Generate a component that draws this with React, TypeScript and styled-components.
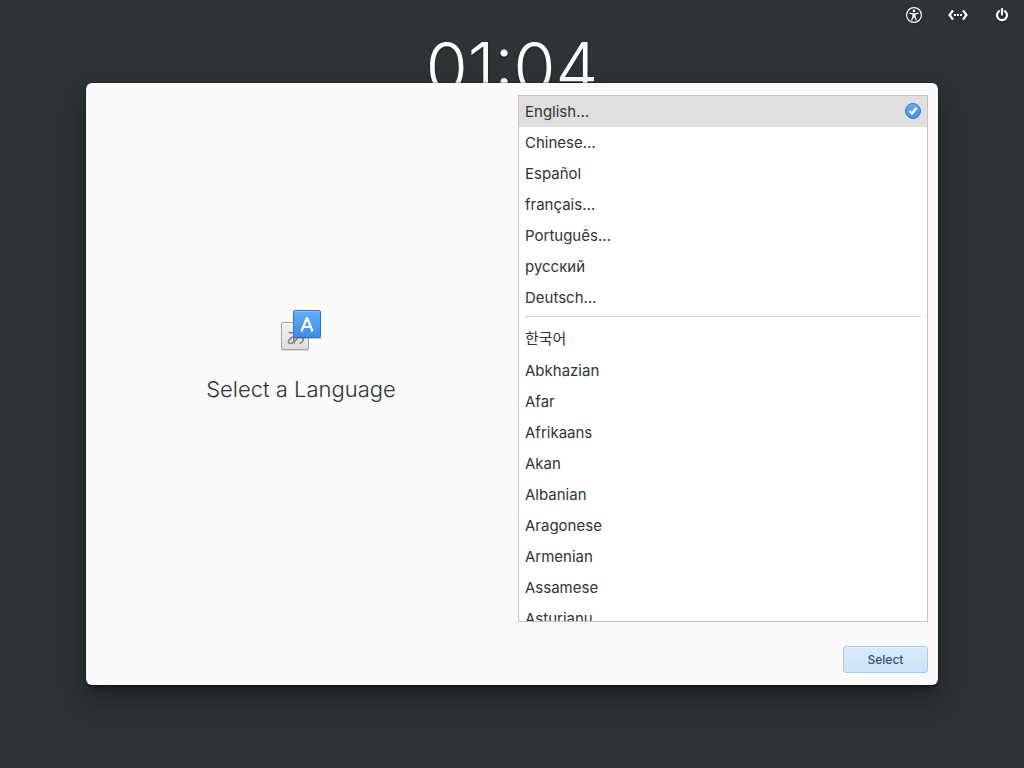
import React, { useState } from "react";
import styled, { createGlobalStyle } from "styled-components";

const GlobalStyle = createGlobalStyle`
  *, *::before, *::after { box-sizing: border-box; }
  body {
    margin: 0;
    background: #2e3436;
    color: #333;
    font-family: Inter, "Noto Sans CJK KR", sans-serif;
  }
`;

const Greeter = styled.div`
  height: 100vh;
  overflow: hidden;
  display: flex;
  flex-direction: column;
`;

const Panel = styled.header`
  display: flex;
  justify-content: flex-end;
  gap: 20px;
  height: 30px;
  padding: 0 10px;
`;

const Indicator = styled.button`
  display: grid;
  place-items: center;
  width: 24px;
  padding: 0;
  border: 0;
  background: none;
  color: #fff;
  svg { filter: drop-shadow(0 1px 1px rgba(0, 0, 0, 0.4)); }
`;

const Clock = styled.time`
  align-self: center;
  color: #fff;
  font-size: 68px;
  font-weight: 300;
  line-height: 74px;
  text-shadow: 0 1px 2px rgba(0, 0, 0, 0.5);
`;

const Overlay = styled.div`
  position: absolute;
  inset: 0;
  display: flex;
  padding: 83px 86px;
  pointer-events: none;
`;

const Dialog = styled.form`
  flex: 1;
  display: flex;
  flex-direction: column;
  gap: 24px;
  padding: 12px 10px;
  border-radius: 6px;
  background: #fafafa;
  box-shadow: 0 0 0 1px rgba(0, 0, 0, 0.2), 0 3px 4px rgba(0, 0, 0, 0.25),
    0 14px 28px rgba(0, 0, 0, 0.36);
  pointer-events: auto;
`;

const Columns = styled.div`
  flex: 1;
  min-height: 0;
  display: grid;
  grid-template-columns: 1fr 1fr;
  grid-template-rows: 100%;
  gap: 12px;
`;

const Intro = styled.div`
  display: flex;
  flex-direction: column;
  align-items: center;
  justify-content: center;
  gap: 16px;
`;

const Title = styled.h1`
  margin: 0;
  padding-bottom: 4px;
  font-size: 22px;
  font-weight: 300;
  line-height: 36px;
`;

const LanguageList = styled.div`
  overflow: hidden;
  border: 1px solid #c4c4c4;
  background: #fff;
`;

const Row = styled.label<{ $selected: boolean; $tall?: boolean }>`
  display: flex;
  align-items: center;
  justify-content: space-between;
  height: ${(p) => (p.$tall ? 33 : 31)}px;
  padding: 0 6px;
  background: ${(p) => (p.$selected ? "#dfdfdf" : "transparent")};
  font-size: 15px;
  line-height: 20px;
  svg { margin-bottom: 1px; }
`;

const Radio = styled.input`
  position: absolute;
  opacity: 0;
  pointer-events: none;
`;

const Separator = styled.hr`
  height: 1px;
  margin: 3px 6px 5px;
  border: 0;
  background: #d4d4d4;
`;

const Actions = styled.div`
  display: flex;
  justify-content: flex-end;
`;

const SuggestedButton = styled.button`
  min-width: 85px;
  height: 27px;
  border: 1px solid #a3c9ee;
  border-radius: 3px;
  background: linear-gradient(#dcebfa, #cde3f8);
  box-shadow: inset 0 1px 0 rgba(255, 255, 255, 0.3);
  color: #2c5278;
  font-family: inherit;
  font-size: 12px;
  font-weight: 500;
`;

const AccessibilityIcon = () => (
  <svg width="18" height="18" viewBox="0 0 18 18" aria-hidden="true">
    <circle cx="9" cy="9" r="7.4" fill="none" stroke="currentColor" strokeWidth="1.2" />
    <circle cx="9" cy="4.9" r="1.4" fill="currentColor" />
    <path
      d="M4.4 6.6 L7.8 7.2 H10.2 L13.6 6.6 V7.7 L10.6 8.5 V10.4 L12 14.2 L10.9 14.6 L9.2 11.2 H8.8 L7.1 14.6 L6 14.2 L7.4 10.4 V8.5 L4.4 7.7 Z"
      fill="currentColor"
    />
  </svg>
);

const NetworkIcon = () => (
  <svg width="20" height="16" viewBox="0 0 20 16" aria-hidden="true">
    <path d="M5 3.4 L1.6 8 L5 12.6 M15 3.4 L18.4 8 L15 12.6" fill="none" stroke="currentColor" strokeWidth="2.4" />
    <path d="M6 7h2v2h-2z M9 7h2v2h-2z M12 7h2v2h-2z" fill="currentColor" />
  </svg>
);

const PowerIcon = () => (
  <svg width="16" height="16" viewBox="0 0 16 16" aria-hidden="true">
    <path d="M5 4.1 A5 5 0 1 0 11 4.1" fill="none" stroke="currentColor" strokeWidth="2.2" strokeLinecap="round" />
    <path d="M8 2.2 V7.6" stroke="currentColor" strokeWidth="2.2" strokeLinecap="round" />
  </svg>
);

const LanguageIcon = () => (
  <svg width="48" height="48" viewBox="0 0 48 48" aria-hidden="true">
    <defs>
      <linearGradient id="sheet" x1="0" y1="0" x2="0" y2="1">
        <stop offset="0" stopColor="#f4f4f4" />
        <stop offset="1" stopColor="#dcdcdc" />
      </linearGradient>
      <linearGradient id="tile" x1="0" y1="0" x2="0" y2="1">
        <stop offset="0" stopColor="#64b0fb" />
        <stop offset="1" stopColor="#3d8be6" />
      </linearGradient>
    </defs>
    <rect x="4" y="42" width="28" height="2" rx="1" fill="#000" opacity="0.14" />
    <rect x="4.5" y="15.5" width="27" height="27" rx="1.5" fill="url(#sheet)" stroke="#a4a4a4" />
    <g fill="none" stroke="#828282" strokeWidth="1.5" strokeLinecap="round">
      <path d="M12 25.5 C16 26 20 25.5 24.5 24.8" />
      <path d="M18.5 21.5 C16.5 27 16 32 17.5 36" />
      <path d="M22.5 28 C20 33 15 37 12.5 36.4 C9.5 35.5 12.5 30 19.5 29 C26.5 28 28.5 33.5 23 36.4" />
    </g>
    <rect x="16" y="30" width="29" height="2" rx="1" fill="#000" opacity="0.2" />
    <rect x="16.5" y="3.5" width="27" height="27" rx="1.5" fill="url(#tile)" stroke="#2b72c8" />
    <path d="M17.5 4.5 H42.5" stroke="#8cc6ff" />
    <path
      d="M24.4 24.5 L29.6 11.5 H30.4 L35.6 24.5 M26.2 20 H33.8"
      fill="none"
      stroke="#fff"
      strokeWidth="2.2"
    />
  </svg>
);

const CheckIcon = () => (
  <svg width="16" height="16" viewBox="0 0 16 16" aria-hidden="true">
    <defs>
      <linearGradient id="disc" x1="0" y1="0" x2="0" y2="1">
        <stop offset="0" stopColor="#62aefb" />
        <stop offset="1" stopColor="#3f92ee" />
      </linearGradient>
    </defs>
    <circle cx="8" cy="8" r="7.5" fill="url(#disc)" stroke="#4576bb" />
    <path d="M4.5 8 L7 10.4 L11.5 4.8" fill="none" stroke="#fff" strokeWidth="2.4" />
  </svg>
);

const suggested = ["English…", "Chinese…", "Español", "français…", "Português…", "русский", "Deutsch…"];
const others = [
  "한국어",
  "Abkhazian",
  "Afar",
  "Afrikaans",
  "Akan",
  "Albanian",
  "Aragonese",
  "Armenian",
  "Assamese",
  "Asturianu",
];

export default function App() {
  const [language, setLanguage] = useState(suggested[0]);

  const renderRow = (name: string) => (
    <Row key={name} $selected={name === language} $tall={name === "한국어"}>
      <Radio type="radio" name="language" checked={name === language} onChange={() => setLanguage(name)} />
      {name}
      {name === language && <CheckIcon />}
    </Row>
  );

  return (
    <>
      <GlobalStyle />
      <Greeter>
        <Panel>
          <Indicator type="button" aria-label="Accessibility">
            <AccessibilityIcon />
          </Indicator>
          <Indicator type="button" aria-label="Network">
            <NetworkIcon />
          </Indicator>
          <Indicator type="button" aria-label="Power">
            <PowerIcon />
          </Indicator>
        </Panel>
        <Clock>01:04</Clock>
      </Greeter>
      <Overlay>
        <Dialog role="dialog" aria-labelledby="title" onSubmit={(e) => e.preventDefault()}>
          <Columns>
            <Intro>
              <LanguageIcon />
              <Title id="title">Select a Language</Title>
            </Intro>
            <LanguageList role="radiogroup" aria-labelledby="title">
              {suggested.map(renderRow)}
              <Separator />
              {others.map(renderRow)}
            </LanguageList>
          </Columns>
          <Actions>
            <SuggestedButton type="submit">Select</SuggestedButton>
          </Actions>
        </Dialog>
      </Overlay>
    </>
  );
}
